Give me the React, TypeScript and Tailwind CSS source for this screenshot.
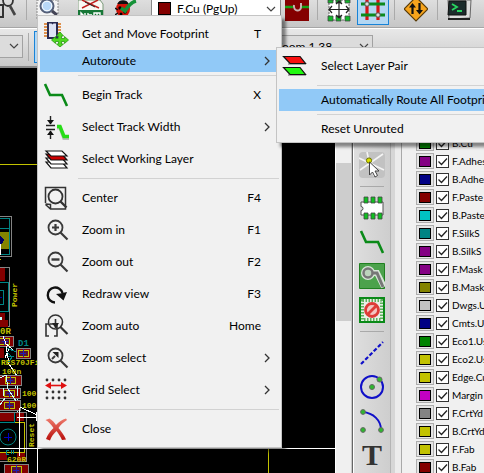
import type { ReactNode } from "react";

/* ---------- menu icons ---------- */

const FootprintMoveIcon = () => (
  <svg width="26" height="26" viewBox="0 0 26 26">
    <g stroke="#d9731a" strokeWidth="1.6">
      <path d="M1 3h17M1 6h17M1 9h17M1 12h17M1 15h17" />
    </g>
    <rect x="4" y="1" width="11" height="17" fill="#2b2b52" />
    <path d="M6 2.500h2.500l1 1 1-1H13V16H6z" fill="#dfe3f5" />
    <path d="M17 11l3.500 4h-2v2.500h3v-2l4 3.500-4 3.500v-2h-3V23h2L17 26l-3.500-3h2v-2.500h-3v2L8.500 19l4-3.500v2h3V15h-2z" fill="#4fd821" stroke="#2a9a10" strokeWidth=".8" />
  </svg>
);
const TrackIcon = () => (
  <svg width="26" height="26" viewBox="0 0 26 26" fill="none">
    <path d="M2 2l5 11h12l5 11" stroke="#0a8a18" strokeWidth="2.600" />
  </svg>
);
const TrackWidthIcon = () => (
  <svg width="26" height="26" viewBox="0 0 26 26" fill="none">
    <path d="M3 11.500h9M3 15.500h9M7.500 2v8M7.500 17v8" stroke="#222" strokeWidth="1.400" />
    <path d="M4 6h7l-3.500 4.500zM4 21h7l-3.500-4.500z" fill="#111" />
    <path d="M14 14h3l4 11h5" stroke="#bbb" strokeWidth="3" />
    <path d="M14 12.500h3l4 10h5" stroke="#27dd17" strokeWidth="3.500" />
  </svg>
);
const LayersIcon = () => (
  <svg width="26" height="26" viewBox="0 0 26 26" stroke="#111" strokeWidth="1.200">
    <path d="M3 16h16l5 6H8z" fill="#fff" />
    <path d="M3 12h16l5 6H8z" fill="#fff" />
    <path d="M3 8h16l5 6H8z" fill="#c00" />
    <path d="M3 5h16l5 5H8z" fill="#fff" />
  </svg>
);
const CenterIcon = () => (
  <svg width="26" height="26" viewBox="0 0 26 26" fill="none" stroke="#333" strokeWidth="1.500">
    <path d="M2.500 18V2.500h20V24H7.500L2.500 19.500M2.500 19l5 .5V24" />
    <circle cx="12.500" cy="11.500" r="7" strokeWidth="1.800" />
    <path d="M17.500 16.500l6 6" strokeWidth="2.400" />
  </svg>
);
const Magnifier = ({ children }: { children?: ReactNode }) => (
  <svg width="26" height="26" viewBox="0 0 26 26" fill="none" stroke="#3a3a3a">
    <circle cx="12.500" cy="10.500" r="7" strokeWidth="1.800" />
    <path d="M17.500 15.500l7 7" strokeWidth="2.200" />
    {children}
  </svg>
);
const ZoomInIcon = () => (
  <Magnifier><path d="M12.500 7v7M9 10.500h7" strokeWidth="2.200" /></Magnifier>
);
const ZoomOutIcon = () => (
  <Magnifier><path d="M8.500 10.500h8" strokeWidth="2.400" /></Magnifier>
);
const ZoomSelectIcon = () => (
  <Magnifier><path d="M9 14l3-3" strokeWidth="2" /><path d="M15.500 7v6l-6-6z" fill="#222" stroke="none" /></Magnifier>
);
const ZoomAutoIcon = () => (
  <svg width="26" height="26" viewBox="0 0 26 26" fill="none" stroke="#333">
    <circle cx="12.500" cy="9" r="7" strokeWidth="1.600" />
    <path d="M17.500 14l7 7" strokeWidth="2.200" />
    <path d="M6 11H3v12h3M11 23h3V11M7 11h5M12.500 6v9" strokeWidth="1.600" />
    <path d="M9 10h7l-3.500 5z" fill="#222" stroke="none" />
  </svg>
);
const RedrawIcon = () => (
  <svg width="26" height="26" viewBox="0 0 26 26" fill="none">
    <path d="M12 21.500A7.500 7.500 0 1 1 19.500 12" stroke="#111" strokeWidth="2.400" />
    <path d="M13 13l4-.5 7-1.500-3.500 8.500z" fill="#111" />
  </svg>
);
const GridIcon = () => (
  <svg width="26" height="26" viewBox="0 0 26 26" fill="none">
    {[3, 15, 21].map((y) =>
      [4, 10, 16, 22].map((x) => <circle key={`${x}-${y}`} cx={x} cy={y} r="1.400" fill="#333" />),
    )}
    <path d="M6 8.500h14" stroke="#e01010" strokeWidth="1.600" />
    <path d="M2 8.500L8 5v7zM24 8.500L18 5v7z" fill="#e01010" />
  </svg>
);
const CloseIcon = () => (
  <svg width="26" height="26" viewBox="0 0 26 26">
    <defs>
      <linearGradient id="closeRed" x1="0" y1="0" x2="0" y2="1">
        <stop offset="0" stopColor="#ee7a6c" />
        <stop offset="1" stopColor="#b80c08" />
      </linearGradient>
    </defs>
    <path d="M2.500 4l4-1.500c3 2 5 4 6.500 6.500C16 6 19 3.500 23 2.500l1 1.500c-4 2.500-6.500 5-8.500 8 3 3.500 5.500 7 7.500 11.500l-4 .5c-1.500-3.500-3.500-6.500-5.500-9-3 3-5.500 6-6.500 9.500l-4-1.500c1.500-4.500 4-7.500 7.500-11C8 8.500 6 6 2.500 4z" fill="url(#closeRed)" />
  </svg>
);
const LayerPairIcon = () => (
  <svg width="26" height="26" viewBox="0 0 26 26" stroke="#111" strokeWidth="1.200">
    <path d="M6 11h18M6 22h18" stroke="#aaa" strokeWidth="2" />
    <path d="M1.500 3.500H18l5.500 7H8z" fill="#f81010" />
    <path d="M1.500 14.500H18l5.500 7H8z" fill="#20f810" />
  </svg>
);

/* ---------- menus ---------- */

type Entry =
  | { label: string; icon?: ReactNode; keys?: string; sub?: boolean; active?: boolean }
  | "-";

const mainMenu: Entry[] = [
  { label: "Get and Move Footprint", icon: <FootprintMoveIcon />, keys: "T" },
  { label: "Autoroute", sub: true, active: true },
  "-",
  { label: "Begin Track", icon: <TrackIcon />, keys: "X" },
  { label: "Select Track Width", icon: <TrackWidthIcon />, sub: true },
  { label: "Select Working Layer", icon: <LayersIcon /> },
  "-",
  { label: "Center", icon: <CenterIcon />, keys: "F4" },
  { label: "Zoom in", icon: <ZoomInIcon />, keys: "F1" },
  { label: "Zoom out", icon: <ZoomOutIcon />, keys: "F2" },
  { label: "Redraw view", icon: <RedrawIcon />, keys: "F3" },
  { label: "Zoom auto", icon: <ZoomAutoIcon />, keys: "Home" },
  { label: "Zoom select", icon: <ZoomSelectIcon />, sub: true },
  { label: "Grid Select", icon: <GridIcon />, sub: true },
  "-",
  { label: "Close", icon: <CloseIcon /> },
];

const subMenu: Entry[] = [
  { label: "Select Layer Pair", icon: <LayerPairIcon /> },
  "-",
  { label: "Automatically Route All Footprints", active: true },
  "-",
  { label: "Reset Unrouted" },
];

function Menu({ entries, className }: { entries: Entry[]; className: string }) {
  return (
    <div role="menu" className={`absolute border border-[#c4c4c4] bg-[#f1f1f1] p-[2px] shadow-[4px_4px_3px_rgba(0,0,0,0.45)] ${className}`}>
      {entries.map((e, i) =>
        e === "-" ? (
          <div key={i} role="separator" className="ml-[38px] flex h-[7px] items-center">
            <div className="h-px w-full bg-[#d2d2d2]" />
          </div>
        ) : (
          <button
            key={i}
            type="button"
            role="menuitem"
            className={`flex w-full items-center whitespace-nowrap text-left ${e.icon ? "h-8" : "h-[22px]"} ${e.active ? "bg-[#91c9f7]" : ""}`}
          >
            <span className="flex w-[42px] shrink-0 pl-[3px]">{e.icon}</span>
            <span className="grow">{e.label}</span>
            {e.keys && <span className="pr-[18px]">{e.keys}</span>}
            {e.sub && (
              <svg className="mr-2" width="8" height="10" viewBox="0 0 8 10" fill="none">
                <path d="M2 1l4 4-4 4" stroke="#333" strokeWidth="1.300" />
              </svg>
            )}
          </button>
        ),
      )}
    </div>
  );
}

/* ---------- toolbars ---------- */

const Sep = () => <div className="h-5 w-px shrink-0 bg-[#aaa]" />;

const Chevron = ({ className }: { className: string }) => (
  <svg className={`pointer-events-none col-start-1 row-start-1 self-center justify-self-end ${className}`} width="10" height="7" viewBox="0 0 10 7" fill="none">
    <path d="M1 1l4 4 4-4" stroke="#444" strokeWidth="1.200" />
  </svg>
);

function TopToolbar() {
  return (
    <header className="flex h-7 shrink-0 items-start border-b border-[#a6a6a6] bg-linear-to-b from-[#dedede] to-[#c6c6c6]">
      <button type="button" aria-label="Find" className="w-[26px] shrink-0">
        <svg width="20" height="20" viewBox="0 0 20 20" fill="none" stroke="#333">
          <path d="M3 0c0 8 10 8 10 0" strokeWidth="1.800" />
          <path d="M10 6l5 9" stroke="#444" strokeWidth="2.600" />
          <path d="M0 5h3v12H0" strokeWidth="2" />
        </svg>
      </button>
      <Sep />
      <button type="button" aria-label="Zoom to fit" className="w-[51px] shrink-0 pl-[9px]">
        <svg width="24" height="20" viewBox="0 0 24 20">
          <path d="M1 0h21v20H1z" fill="#f4f4f4" stroke="#888" strokeDasharray="2 1" />
          <circle cx="11" cy="6" r="6.500" fill="#a9cdf2" stroke="#555f77" strokeWidth="2" />
          <circle cx="11" cy="6" r="4.800" fill="#b8d8f8" stroke="#fff" />
          <path d="M16 11l5 4" stroke="#445" strokeWidth="3" />
        </svg>
      </button>
      <button type="button" aria-label="Read netlist" className="w-[37px] shrink-0">
        <svg width="26" height="20" viewBox="0 0 26 20">
          <path d="M0 0h22l3 4v16H0z" fill="#f8f8f4" stroke="#7a9a7a" />
          <path d="M4 0l17 8M4 8L20 0" stroke="#c02020" strokeWidth="1.400" />
          <path d="M7 2l10 5" stroke="#222" />
          <path d="M0 10h25v8H0z" fill="#187838" />
          <path d="M3 17v-4l4 4v-4M10 13v4M10 15h4M16 17v-4h3v4M19 13h3v4" stroke="#fff" strokeWidth="1.400" fill="none" />
        </svg>
      </button>
      <button type="button" aria-label="Design rules check" className="w-9 shrink-0">
        <svg width="24" height="20" viewBox="0 0 24 20">
          <ellipse cx="8" cy="9" rx="7" ry="8" fill="#d41408" />
          <path d="M3 4c2-4 8-4 10 0M0 8l3 2M0 15l3-2" fill="#111" stroke="#111" strokeWidth="1.500" />
          <circle cx="5" cy="8" r="1.700" /><circle cx="10" cy="12" r="1.700" /><circle cx="6" cy="14" r="1.500" />
          <path d="M6 8l4 3C13 6 17 2 21 1" stroke="#159238" strokeWidth="3.500" fill="none" />
        </svg>
      </button>
      <div className="grid h-6 w-[130px] shrink-0">
        <select aria-label="Active layer" className="col-start-1 row-start-1 -mt-1 appearance-none border border-[#888] bg-white pb-[2px] pl-[25px] leading-5">
          <option>F.Cu (PgUp)</option>
        </select>
        <span className="pointer-events-none col-start-1 row-start-1 ml-[7px] mt-[2px] size-[13px] border border-black bg-[#840000]" />
        <Chevron className="mr-[5px] mb-[5px]" />
      </div>
      <button type="button" aria-label="Track display" className="ml-1 w-8 shrink-0">
        <svg width="24" height="21" viewBox="0 0 24 21" fill="none">
          <path d="M0 0h24v21H0z" fill="#840000" />
          <path d="M0 7h8M16 7h8" stroke="#16a016" strokeWidth="2.500" />
          <path d="M9 5c-1 7 7 7 7 2V3" stroke="#c9b0b0" strokeWidth="2" />
        </svg>
      </button>
      <Sep />
      <button type="button" aria-label="Footprint mode" className="ml-[9px] w-[30px] shrink-0">
        <svg width="24" height="22" viewBox="0 0 24 22" fill="none">
          <path d="M2 0h20v20H2z" fill="#fff" stroke="#666" strokeDasharray="2 1" />
          <path d="M1 0h5v3H1zM9 0h5v3H9zM18 0h5v3h-5zM1 16h5v5H1zM9 16h5v5H9zM18 16h5v5h-5z" fill="#12b82a" stroke="#444" strokeWidth=".8" />
          <path d="M2 9.500h20M12 1v17M5 6L2 9.500 5 13M19 6l3 3.500-3 3.500M9 4l3-3 3 3M9 15l3 3 3-3" stroke="#222" strokeWidth="1.200" />
        </svg>
      </button>
      <button type="button" aria-label="Track mode" className="flex h-[25px] w-8 shrink-0 justify-center border border-t-0 border-[#1883d7] bg-[#b3d7f3]">
        <svg width="26" height="22" viewBox="0 0 26 22" fill="none">
          <path d="M7 0v20M18 0v20" stroke="#d41414" strokeWidth="3.200" />
          <path d="M1 4h24M1 15h24" stroke="#0a8a1c" strokeWidth="3" />
          <circle cx="7" cy="4" r="2.200" fill="#ddd" stroke="#555" />
          <circle cx="18" cy="15" r="2.200" fill="#ddd" stroke="#555" />
        </svg>
      </button>
      <div className="w-[5px] shrink-0" />
      <Sep />
      <button type="button" aria-label="Autorouter mode" className="ml-[9px] w-[33px] shrink-0">
        <svg width="24" height="22" viewBox="0 0 24 22">
          <path d="M12-3L24 9 12 21 0 9z" fill="#f7a41c" stroke="#5a3c08" strokeWidth="1.200" />
          <path d="M8.500 14V6M15.500 3v8" stroke="#111" strokeWidth="2.200" />
          <path d="M5 7.500L8.500 3 12 7.500zM12 10h7l-3.500 4.500z" fill="#111" />
        </svg>
      </button>
      <Sep />
      <button type="button" aria-label="Scripting console" className="ml-2 shrink-0">
        <svg width="26" height="22" viewBox="0 0 26 22">
          <path d="M2 0h23l-1 18-21 1z" fill="#ddd" stroke="#666" />
          <path d="M3 1h17v14H2z" fill="#1c2c2c" stroke="#111" />
          <path d="M2 19h22" stroke="#222" strokeWidth="2" />
          <path d="M6 4l5 3-5 3M11 11h5" stroke="#28d860" strokeWidth="1.800" fill="none" />
        </svg>
      </button>
    </header>
  );
}

function OptionsToolbar() {
  return (
    <div className="flex h-[38px] shrink-0 items-start border-t border-white bg-linear-to-b from-[#e8e8e8] to-[#c9c9c9]">
      <div className="mt-[6px] grid h-[23px] w-[23px] shrink-0">
        <select aria-label="Track width" className="col-start-1 row-start-1 w-full appearance-none border border-l-0 border-[#a2a2a2] bg-[#dcdcdc]" />
        <Chevron className="mr-1" />
      </div>
      <div className="ml-[5px] mr-[5px] mt-1 h-7 w-px shrink-0 bg-[#aaa]" />
      <button type="button" aria-label="Auto track width" className="mt-[2px] h-8 w-8 shrink-0 border border-[#1883d7] bg-[#b3d7f3]" />
      <div className="ml-[202px] mt-[6px] grid h-[23px] w-[105px] shrink-0">
        <select aria-label="Zoom" className="col-start-1 row-start-1 appearance-none border border-[#a2a2a2] bg-[#dcdcdc] pl-[6px] leading-5">
          <option>Zoom 1.38</option>
        </select>
        <Chevron className="mr-1" />
      </div>
    </div>
  );
}

function RightTool({ label, active, children }: { label: string; active?: boolean; children: ReactNode }) {
  return (
    <button type="button" aria-label={label} className="flex h-[34px] items-center justify-center">
      <span className={`flex size-[26px] rounded-sm ${active ? "bg-[#c2c2c2]" : ""}`}>
        <svg width="26" height="26" viewBox="0 0 26 26" fill="none">{children}</svg>
      </span>
    </button>
  );
}

const ToolSep = () => (
  <div className="flex h-[9px] items-center px-[6px]">
    <div className="h-px w-full bg-[#a9a9a9]" />
  </div>
);

function RightToolbar() {
  return (
    <div className="flex w-[37px] shrink-0 flex-col border-r border-[#b4b4b4] bg-linear-to-r from-[#dedede] to-[#cecece] pt-20">
      <RightTool label="Highlight net" active>
        <path d="M0 6l25 12M1 18L24 2M10 9L8 0M10 9l5 15" stroke="#f4f4f4" strokeWidth="1.600" />
        <circle cx="10" cy="8.500" r="2.600" fill="#d8e000" stroke="#6a7000" />
        <path d="M10.500 10v13l3-3 2.500 5 2.500-1.500-2.500-4.500h4z" fill="#fff" stroke="#444" />
      </RightTool>
      <ToolSep />
      <RightTool label="Add footprint">
        <path d="M2 7h22v13H2v-4.500a2 2 0 0 0 0-4z" fill="#fff" stroke="#555" />
        <path d="M5 2h4v6H5zM12 2h4v6h-4zM19 2h4v6h-4zM5 18h4v6H5zM12 18h4v6h-4zM19 18h4v6h-4z" fill="#10c020" stroke="#444" strokeWidth=".8" />
      </RightTool>
      <RightTool label="Route tracks">
        <path d="M2 2l5 11h12l5 11" stroke="#0a8a18" strokeWidth="2.600" />
      </RightTool>
      <RightTool label="Add filled zone">
        <path d="M.5.500h25v25H.5z" fill="#4ca24c" stroke="#208020" />
        <path d="M9 10h9l7 14" stroke="#d8e6d8" strokeWidth="6" />
        <circle cx="9" cy="10" r="5" stroke="#d8e6d8" strokeWidth="4" />
        <path d="M11 10h7l6 14" stroke="#777" strokeWidth="3" />
        <circle cx="9" cy="10" r="4.500" fill="#bcd4bc" stroke="#777" strokeWidth="2.500" />
      </RightTool>
      <RightTool label="Add keepout area">
        <path d="M1 1h24v24H1z" fill="#e8efe8" stroke="#0a8a18" strokeWidth="2" />
        <path d="M3.500 3.500h19v19h-19z" stroke="#5cb25c" strokeWidth="3" strokeDasharray="1.500 1.500" />
        <circle cx="13" cy="13" r="6.500" fill="#f3c5c2" stroke="#de3c38" strokeWidth="2.800" />
        <path d="M8.500 17.500l9-9" stroke="#de3c38" strokeWidth="2.800" />
      </RightTool>
      <ToolSep />
      <RightTool label="Add graphic line">
        <path d="M2 24L24 2" stroke="#1010c8" strokeWidth="2.200" strokeDasharray="4 2" />
      </RightTool>
      <RightTool label="Add circle">
        <circle cx="13" cy="13" r="11" stroke="#1010c8" strokeWidth="2" />
        <circle cx="13" cy="13" r="2.500" fill="#2eb82e" stroke="#666" />
        <circle cx="20.500" cy="5.500" r="2.500" fill="#2eb82e" stroke="#666" />
      </RightTool>
      <RightTool label="Add arc">
        <path d="M4 4c10 1 18 8 18 18" stroke="#1010c8" strokeWidth="2" />
        <circle cx="4" cy="4" r="2.400" fill="#2eb82e" stroke="#666" />
        <circle cx="4" cy="22" r="2.400" fill="#2eb82e" stroke="#666" />
        <circle cx="22" cy="22" r="2.400" fill="#2eb82e" stroke="#666" />
      </RightTool>
      <button type="button" aria-label="Add text" className="flex h-[34px] items-center justify-center font-['Liberation_Serif',serif] text-[30px] leading-8 text-[#333]">
        <b className="font-bold">T</b>
      </button>
    </div>
  );
}

const layers = [
  ["B.Cu", "#008400"],
  ["F.Adhes", "#840084"],
  ["B.Adhes", "#000084"],
  ["F.Paste", "#840000"],
  ["B.Paste", "#00c2c2"],
  ["F.SilkS", "#008484"],
  ["B.SilkS", "#840084"],
  ["F.Mask", "#840084"],
  ["B.Mask", "#848400"],
  ["Dwgs.User", "#c2c2c2"],
  ["Cmts.User", "#000084"],
  ["Eco1.User", "#008400"],
  ["Eco2.User", "#c2c200"],
  ["Edge.Cuts", "#c2c200"],
  ["Margin", "#c200c2"],
  ["F.CrtYd", "#848484"],
  ["B.CrtYd", "#c2c200"],
  ["F.Fab", "#c2c200"],
  ["B.Fab", "#840000"],
];

function LayerPanel() {
  return (
    <aside className="w-[83px] shrink-0 overflow-hidden border-l border-[#a9a9a9] bg-[#f0f0f0] pl-[14px] pt-[66px]">
      {layers.map(([name, color]) => (
        <div key={name} className="flex h-[18px] items-center text-[10px]">
          <button type="button" aria-label={`${name} colour`} className="flex h-4 w-[18px] shrink-0 items-center justify-center border border-[#adadad] bg-[#e4e4e4]">
            <span className="h-[11px] w-3 border border-black" style={{ backgroundColor: color }} />
          </button>
          <label className="ml-[2px] flex items-center gap-[3px] whitespace-nowrap">
            <span className="grid size-[13px] shrink-0">
              <input type="checkbox" defaultChecked className="col-start-1 row-start-1 size-[13px] appearance-none border border-[#333] bg-white" />
              <svg className="pointer-events-none col-start-1 row-start-1" width="13" height="13" viewBox="0 0 13 13" fill="none">
                <path d="M2.500 6.500l3 3 5.500-6" stroke="#222" strokeWidth="1.300" />
              </svg>
            </span>
            {name}
          </label>
        </div>
      ))}
    </aside>
  );
}

/* ---------- board canvas ---------- */

const Pad = ({ x, y, w, h = 10 }: { x: number; y: number; w: number; h?: number }) => (
  <g>
    <rect x={x} y={y} width={w} height={h} fill="#840000" stroke="#848484" />
    <rect x={x + w / 2 - 5} y={y + 2} width="10" height={h - 4} fill="#5a1030" stroke="#c2c200" />
    <path d={`M${x + w / 2 - 3} ${y + h / 2}h6M${x + w / 2} ${y + 1}v${h - 2}`} stroke="#2020b0" />
  </g>
);

function Board() {
  return (
    <svg className="block" width="1200" height="900" viewBox="0 68 1200 900" fill="none" shapeRendering="crispEdges" fontFamily="'Liberation Mono', monospace" fontSize="9" fontWeight="bold">
      <path d="M0 164.500h37" stroke="#c2c200" />
      <path d="M0 216.500h11.500v40H0" stroke="#848484" />
      <path d="M0 218.500h9.500v36H0M0 228.500h10" stroke="#008484" />
      <path d="M0 232h9v17H0z" fill="#848400" />
      <path d="M0 236l4 4-1 3-3 2z" fill="#000060" />
      <path d="M0 244h1v11H0z" fill="#fff" />
      <path d="M0 259.500h1" stroke="#c2c200" />
      <path d="M0 268h5v13H0zM0 313h5v13H0z" fill="#840000" />
      <path d="M0 267.500h9.500v59H0" stroke="#848484" />
      <path d="M0 282.500h8.500v29H0M0 290.500h3.500v14H0" stroke="#008484" />
      <path d="M0 297.500h2" stroke="#0000a0" />
      <text transform="translate(17 307) rotate(-90)" fill="#c2c200" fontSize="8">Power</text>
      <path d="M0 317h2v8H0z" fill="#c8ffff" />
      <path d="M0 320h8v7H0z" fill="#840000" />
      <text x="0" y="334" fill="#c2c200">0R</text>
      <Pad x={-4} y={336} w={17} />
      <path d="M3 336l3 8 4 3 5 5M6 346l3 18 8 12-2 8M10 346l-5 12" stroke="#fff" />
      <path d="M0 348h4v10H0z" fill="#840000" />
      <path d="M7 352l5 5-4 6M8 356h6M16 352l-9-4" stroke="#008484" />
      <text x="18" y="346" fill="#008484">D1</text>
      <Pad x={16} y={348} w={14} />
      <text x="1" y="365" fill="#c2c200" fontSize="8">RES70JFin</text>
      <text x="2" y="374" fill="#c2c200" fontSize="8">100n</text>
      <path d="M1 376h16v36M15 374v30" stroke="#c8ffff" />
      <Pad x={-1} y={375} w={22} />
      <Pad x={-1} y={388} w={21} />
      <Pad x={-1} y={400} w={21} />
      <path d="M0 378l6-3 2 14 8 12M0 405l5-7M3 388v8M17 388v8" stroke="#c8ffff" />
      <text x="22" y="396" fill="#c2c200" fontSize="8">100</text>
      <text x="22" y="408" fill="#c2c200" fontSize="8">100</text>
      <path d="M0 412h15v9H0zM16 412h8v9h-8zM0 453h7v7H0zM17 453h8v8h-8z" fill="#840000" />
      <path d="M0 412.500h26.500v49H0" stroke="#848484" />
      <path d="M0 422.500h24.500v30H0" stroke="#c2c200" />
      <path d="M14.500 413v9H0" stroke="#008484" />
      <g shapeRendering="auto">
        <circle cx="8" cy="437" r="8" stroke="#008484" />
      </g>
      <path d="M8.500 433v8M4 437.500h8" stroke="#0000c2" />
      <text transform="translate(34 447) rotate(-90)" fill="#c2c200" fontSize="8">Reset</text>
      <path d="M20 407l17 8M17 417.500h20M19.500 408v48M36.500 412v9" stroke="#fff" />
      <path d="M9 450H6v4h3M11 450v4M13 450v4" stroke="#008484" />
      <text x="7" y="462" fill="#c2c200" fontSize="8">620R</text>
      <Pad x={4} y={464} w={24} h={12} />
      <path d="M0 448.500h1200M37.500 448v520" stroke="#fff" />
      <path d="M268.500 449v520" stroke="#c2c200" />
    </svg>
  );
}

export default function App() {
  return (
    <div className="relative flex h-screen flex-col overflow-hidden bg-[#f0f0f0] font-['Lato','Noto_Sans',sans-serif] text-[12px] text-black">
      <TopToolbar />
      <OptionsToolbar />
      <main className="flex min-h-0 grow border-t-2 border-[#8a8a8a]">
        <div className="min-w-0 grow overflow-hidden bg-black">
          <Board />
        </div>
        <div className="w-4 shrink-0 border-l border-white bg-[#f0f0f0] pt-[95px]">
          <div className="h-[158px] bg-[#cdcdcd]" />
        </div>
        <div className="w-[3px] shrink-0 border-x border-l-[#c8c8c8] border-r-white bg-[#666]" />
        <RightToolbar />
        <div className="w-[10px] shrink-0 border-l-4 border-[#d6d6d6] bg-[#ececec]" />
        <LayerPanel />
      </main>
      <Menu entries={mainMenu} className="left-[37px] top-[15px] w-[245px]" />
      <Menu entries={subMenu} className="left-[276px] top-[47px]" />
    </div>
  );
}
